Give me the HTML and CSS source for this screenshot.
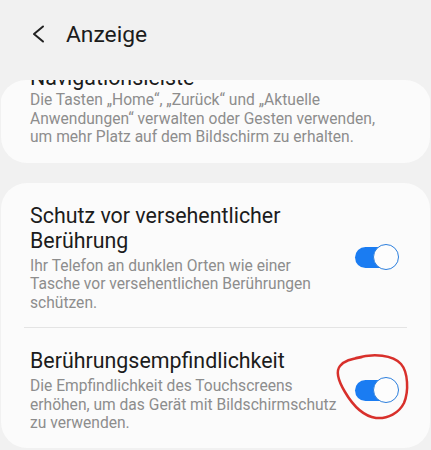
FILE: index.html
```html
<!DOCTYPE html>
<html lang="de">

<head>
    <meta charset="UTF-8">
    <meta name="viewport" content="width=device-width, initial-scale=1.0">
    <title>Anzeige</title>
    <link rel="stylesheet" href="styles.css">
</head>

<body>
    <header class="topbar">
        <svg class="back" width="16" height="18" viewBox="0 0 16 18">
            <polyline points="12,1.5 3,9 12,16.5" fill="none" stroke="#222" stroke-width="2" stroke-linecap="round" stroke-linejoin="round" />
        </svg>
        <h1>Anzeige</h1>
    </header>

    <div class="list">
        <div class="card card-first">
            <div class="row">
                <div class="text">
                    <div class="title">Navigationsleiste</div>
                    <div class="desc">Die Tasten „Home“, „Zurück“ und „Aktuelle Anwendungen“ verwalten oder Gesten verwenden, um mehr Platz auf dem Bildschirm zu erhalten.</div>
                </div>
            </div>
        </div>

        <div class="card">
            <div class="row">
                <div class="text">
                    <div class="title">Schutz vor versehentlicher Berührung</div>
                    <div class="desc">Ihr Telefon an dunklen Orten wie einer Tasche vor versehentlichen Berührungen schützen.</div>
                </div>
                <div class="switch on"><span class="knob"></span></div>
            </div>
            <div class="divider"></div>
            <div class="row">
                <div class="text">
                    <div class="title">Berührungsempfindlichkeit</div>
                    <div class="desc">Die Empfindlichkeit des Touchscreens erhöhen, um das Gerät mit Bildschirmschutz zu verwenden.</div>
                </div>
                <div class="switch on"><span class="knob"></span></div>
            </div>
        </div>
    </div>

    <!-- hand drawn mark around the second switch -->
    <svg class="mark" width="431" height="450" viewBox="0 0 431 450">
        <path d="M 356 358 C 374 353, 393 355, 401 364 C 408 372, 409 391, 404 403 C 399 413, 388 419, 376 418 C 363 416, 352 404, 345 392 C 339 382, 335 372, 340 366 C 345 360, 352 359, 362 357"
            fill="none" stroke="#d8302b" stroke-width="2.5" stroke-linecap="round" />
    </svg>
</body>

</html>
```

FILE: styles.css
```css
body {
    font-family: Roboto, "Noto Sans", sans-serif;
    background-color: #f1f1f1;
    margin: 0;
    padding: 0;
    height: 450px;
    overflow: hidden;
    position: relative;
}

.topbar {
    height: 68px;
    display: flex;
    align-items: center;
    padding-left: 31px;
}

.back {
    display: block;
}

.topbar h1 {
    margin: 0 0 0 19px;
    font-size: 22.8px;
    font-weight: 400;
    color: #1c1c1c;
}

.list {
    margin-top: 12px;
    height: 370px;
    overflow: hidden;
    border-radius: 26px 26px 0 0;
}

.card {
    background: #fbfbfb;
    border-radius: 26px;
    margin: 0 1px 20px;
}

.card-first {
    margin-top: -35px;
}

.row {
    display: flex;
    align-items: center;
    padding: 20px 31px 15px 29px;
}

.card-first .row {
    padding-bottom: 16px;
}

.text {
    flex: 1;
}

.title {
    font-size: 21.4px;
    line-height: 25px;
    color: #1c1c1c;
}

.desc {
    margin-top: 4px;
    font-size: 15.6px;
    line-height: 18.5px;
    color: #8d8d8d;
}

.card-first .desc {
    margin-top: 1px;
}

.card .row .text {
    max-width: 310px;
}

.card-first .row .text {
    max-width: 360px;
}

.divider {
    height: 1px;
    background: #e4e4e4;
    margin: 0 23px;
}

.switch {
    width: 44px;
    height: 27px;
    margin-left: 16px;
    position: relative;
    flex-shrink: 0;
}

.switch.on::before {
    content: "";
    position: absolute;
    left: 0;
    top: 3px;
    width: 38px;
    height: 21px;
    border-radius: 11px;
    background: #1a7cf2;
}

.knob {
    position: absolute;
    right: 0;
    top: 0;
    width: 24px;
    height: 24px;
    border-radius: 50%;
    background: #fdfdfd;
    border: 1.5px solid #2c7fdd;
}

.mark {
    position: absolute;
    top: 0;
    left: 0;
    pointer-events: none;
}
```
